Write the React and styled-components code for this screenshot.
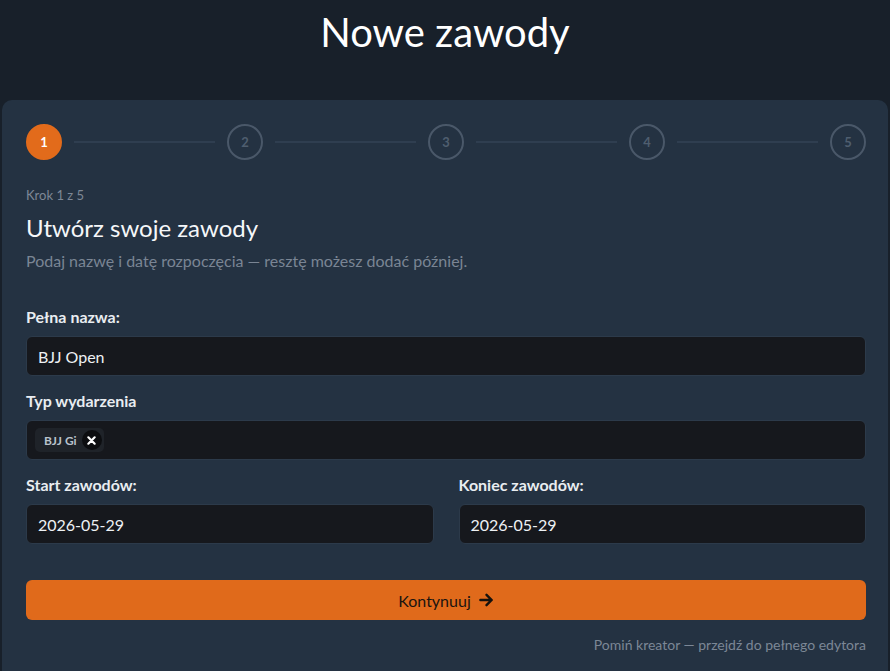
import React from "react";
import styled, { createGlobalStyle } from "styled-components";

const GlobalStyle = createGlobalStyle`
  html, body {
    margin: 0;
    background: #18202a;
    font-family: Lato, "Open Sans", sans-serif;
    color: #f4f6f8;
  }
  #root {
    min-height: 100vh;
  }
`;

const steps = [1, 2, 3, 4, 5];

const Page = styled.div`
  display: flex;
  flex-direction: column;
  align-items: center;
  padding: 0 2px;
  height: 671px;
  overflow: hidden;
`;

const PageTitle = styled.h1`
  margin: 8px 0 0;
  height: 92px;
  flex-shrink: 0;
  font-size: 40px;
  font-weight: 400;
  line-height: 48px;
  color: #ffffff;
`;

const Card = styled.div`
  align-self: stretch;
  flex: 1;
  background: #243242;
  border-radius: 10px 10px 0 0;
  padding: 24px 22px 30px 24px;
  display: flex;
  flex-direction: column;
`;

const Stepper = styled.div`
  display: flex;
  align-items: center;
  gap: 12px;
`;

const StepCircle = styled.div`
  width: 36px;
  height: 36px;
  box-sizing: border-box;
  border-radius: 50%;
  display: flex;
  align-items: center;
  justify-content: center;
  flex-shrink: 0;
  font-size: 13px;
  font-weight: 700;
  background: ${(p) => (p.$active ? "#e26b1b" : "transparent")};
  border: 2px solid ${(p) => (p.$active ? "#e26b1b" : "#4a5869")};
  color: ${(p) => (p.$active ? "#ffffff" : "#4f5e6f")};
`;

const StepLine = styled.div`
  flex: 1;
  height: 2px;
  background: #2f3e50;
`;

const StepInfo = styled.div`
  margin-top: 27px;
  font-size: 13px;
  line-height: 16px;
  color: #7e8896;
`;

const Heading = styled.h2`
  margin: 10px 0 0;
  font-size: 24px;
  line-height: 29px;
  font-weight: 400;
  color: #f5f7f9;
`;

const Lead = styled.p`
  margin: 9px 0 0;
  font-size: 16px;
  line-height: 19px;
  color: #7a8594;
`;

const Form = styled.div`
  margin-top: 37px;
  display: flex;
  flex-direction: column;
  gap: 15px;
`;

const Row = styled.div`
  display: grid;
  grid-template-columns: 1fr 1fr;
  gap: 25px;
`;

const Field = styled.div`
  display: flex;
  flex-direction: column;
  gap: 10px;
`;

const Label = styled.label`
  font-size: 16px;
  font-weight: 700;
  color: #e9edf1;
  line-height: 19px;
`;

const Box = styled.div`
  height: 40px;
  box-sizing: border-box;
  background: #16181d;
  border: 1px solid #2c3a4a;
  border-radius: 6px;
  padding: 0 11px;
  display: flex;
  align-items: center;
  gap: 6px;
  font-size: 16px;
  color: #eef1f4;
`;

const TagBox = styled(Box)`
  padding: 0 8px;
`;

const Tag = styled.span`
  display: inline-flex;
  align-items: center;
  gap: 5px;
  height: 24px;
  padding: 0 2px 0 9px;
  border-radius: 5px;
  background: #1f2329;
  font-size: 12px;
  font-weight: 700;
  color: #b9c2cc;
`;

const TagRemove = styled.span`
  width: 20px;
  height: 20px;
  border-radius: 50%;
  background: #0c0d10;
  display: flex;
  align-items: center;
  justify-content: center;
`;

const Button = styled.button`
  margin-top: 36px;
  height: 40px;
  flex-shrink: 0;
  border: none;
  border-radius: 6px;
  background: #e06a1b;
  color: #1a1410;
  font-family: inherit;
  font-size: 16px;
  display: flex;
  align-items: center;
  justify-content: center;
  gap: 8px;
  cursor: pointer;
`;

const SkipLink = styled.a`
  align-self: flex-end;
  margin-top: 16px;
  font-size: 14px;
  line-height: 17px;
  color: #7c8796;
  text-decoration: none;
`;

const App = () => {
  return (
    <>
      <GlobalStyle />
      <Page>
        <PageTitle>Nowe zawody</PageTitle>
        <Card>
          <Stepper>
            {steps.map((n) => (
              <React.Fragment key={n}>
                {n > 1 && <StepLine />}
                <StepCircle $active={n === 1}>{n}</StepCircle>
              </React.Fragment>
            ))}
          </Stepper>
          <StepInfo>Krok 1 z 5</StepInfo>
          <Heading>Utwórz swoje zawody</Heading>
          <Lead>Podaj nazwę i datę rozpoczęcia — resztę możesz dodać później.</Lead>

          <Form>
            <Field>
              <Label>Pełna nazwa:</Label>
              <Box>BJJ Open</Box>
            </Field>
            <Field>
              <Label>Typ wydarzenia</Label>
              <TagBox>
                <Tag>
                  BJJ Gi
                  <TagRemove>
                    <svg width="9" height="9" viewBox="0 0 10 10">
                      <path d="M1.5 1.5 L8.5 8.5 M8.5 1.5 L1.5 8.5" stroke="#ffffff" strokeWidth="2.4" strokeLinecap="round" />
                    </svg>
                  </TagRemove>
                </Tag>
              </TagBox>
            </Field>
            <Row>
              <Field>
                <Label>Start zawodów:</Label>
                <Box>2026-05-29</Box>
              </Field>
              <Field>
                <Label>Koniec zawodów:</Label>
                <Box>2026-05-29</Box>
              </Field>
            </Row>
          </Form>

          <Button>
            Kontynuuj
            <svg width="15" height="14" viewBox="0 0 16 14">
              <path d="M1.5 7 H13.5 M8 1.5 L13.5 7 L8 12.5" fill="none" stroke="#15110d" strokeWidth="2.6" strokeLinecap="round" strokeLinejoin="round" />
            </svg>
          </Button>
          <SkipLink href="#">Pomiń kreator — przejdź do pełnego edytora</SkipLink>
        </Card>
      </Page>
    </>
  );
};

export default App;
